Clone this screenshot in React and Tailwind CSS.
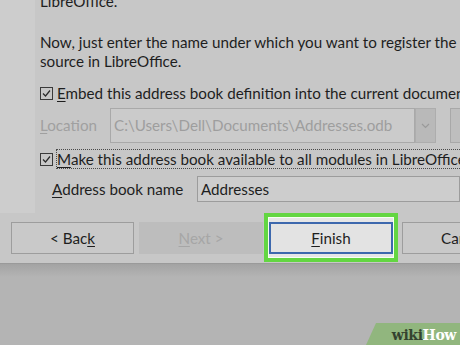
import React from "react";

const Check = () => (
  <span className="w-[13px] h-[13px] border border-[#3a3a3a] flex items-center justify-center shrink-0">
    <svg width="11" height="11" viewBox="0 0 11 11">
      <polyline points="2,5.5 4.5,8 9,2.5" fill="none" stroke="#2a2a2a" strokeWidth="1.2" />
    </svg>
  </span>
);

export default function App() {
  return (
    <div className="w-[460px] h-[345px] overflow-hidden flex flex-col bg-[#c7c7c7] font-['Lato','Liberation_Sans',sans-serif] text-[15.2px] leading-[19px] text-[#1e1e1e]">
      {/* wizard page */}
      <div className="flex h-[213px] shrink-0">
        <div className="w-[35px] shrink-0 bg-[#cdcdcd]" />
        <div className="flex-1 min-w-0 pl-[5px] whitespace-nowrap overflow-hidden">
          <p className="-mt-[8px]">LibreOffice.</p>
          <p className="mt-[22px]">
            Now, just enter the name under which you want to register the data
            <br />
            source in LibreOffice.
          </p>
          <div className="mt-[13px] flex items-center gap-[4px]">
            <Check />
            <span>
              <u className="underline-offset-2">E</u>mbed this address book definition into the current document.
            </span>
          </div>
          <div className="mt-[5px] flex items-center h-[35px]">
            <span className="w-[70px] shrink-0 text-[#a0a0a0]">
              <u className="underline-offset-2">L</u>ocation
            </span>
            <div className="w-[305px] h-full shrink-0 border border-[#a9a9a9] bg-[#cbcbcb] flex items-center pl-[3px] text-[#9e9e9e]">
              C:\Users\Dell\Documents\Addresses.odb
            </div>
            <div className="w-[21px] h-full shrink-0 bg-[#b9b9b9] border border-[#adadad] flex items-center justify-center">
              <svg width="9" height="6" viewBox="0 0 9 6">
                <polyline points="1,1 4.5,4.5 8,1" fill="none" stroke="#9a9a9a" strokeWidth="1.2" />
              </svg>
            </div>
            <div className="ml-[14px] w-[40px] h-full shrink-0 bg-[#bebebe] border border-[#a8a8a8]" />
          </div>
          <div className="mt-[6px] flex items-center gap-[3px] h-[20px]">
            <Check />
            <span className="border border-dotted border-[#4a4a4a] h-[20px] leading-[18px] pr-10">
              <u className="underline-offset-2">M</u>ake this address book available to all modules in LibreOffice.
            </span>
          </div>
          <div className="mt-[7px] flex items-center h-[26px] pl-[12px]">
            <span className="w-[145px] shrink-0">
              <u className="underline-offset-2">A</u>ddress book name
            </span>
            <div className="flex-1 h-full border border-[#9c9c9c] bg-[#cdcdcd] flex items-center pl-[3px]">
              Addresses
            </div>
          </div>
        </div>
      </div>

      {/* button bar */}
      <div className="h-[50px] shrink-0 flex items-start pl-[11px] whitespace-nowrap">
        <button className="mt-[9px] w-[123px] h-[32px] shrink-0 border border-[#9d9d9d] bg-[#c9c9c9] text-[#1e1e1e]">
          &lt; Bac<u className="underline-offset-2">k</u>
        </button>
        <button className="mt-[9px] ml-[5px] w-[124px] h-[32px] shrink-0 bg-[#bdbdbd] text-[#a6a6a6]">
          <u className="underline-offset-2">N</u>ext &gt;
        </button>
        <div className="ml-[1px] shrink-0 border-[4px] border-[#63d642] bg-[#e6e6e6] pt-[5px] px-[1px] pb-[4px] shadow-[inset_0_0_0_1px_#f6fff2]">
          <button className="w-[124px] h-[32px] border-2 border-[#3d68ad] bg-[#e3e3e3] text-[#1e1e1e] block">
            <u className="underline-offset-2">F</u>inish
          </button>
        </div>
        <button className="mt-[9px] ml-[4px] w-[123px] h-[32px] shrink-0 border border-[#9d9d9d] bg-[#c9c9c9] text-[#1e1e1e]">
          Cancel
        </button>
      </div>

      {/* below dialog */}
      <div className="relative flex-1 bg-[linear-gradient(#a3a3a3,#b4b4b4_13px)] border-t border-[#9a9a9a]">
        <div className="absolute right-0 bottom-0 w-[94px] h-[22px] bg-[#91b67e] [clip-path:polygon(10px_0,100%_0,100%_100%,0_100%)] flex items-center justify-end pr-[4px] pt-[2px] font-['DejaVu_Serif',serif] font-bold text-[14px] leading-none tracking-[-0.4px]">
          <span className="text-[#34432f]">wiki</span>
          <span className="text-white">How</span>
        </div>
      </div>
    </div>
  );
}
